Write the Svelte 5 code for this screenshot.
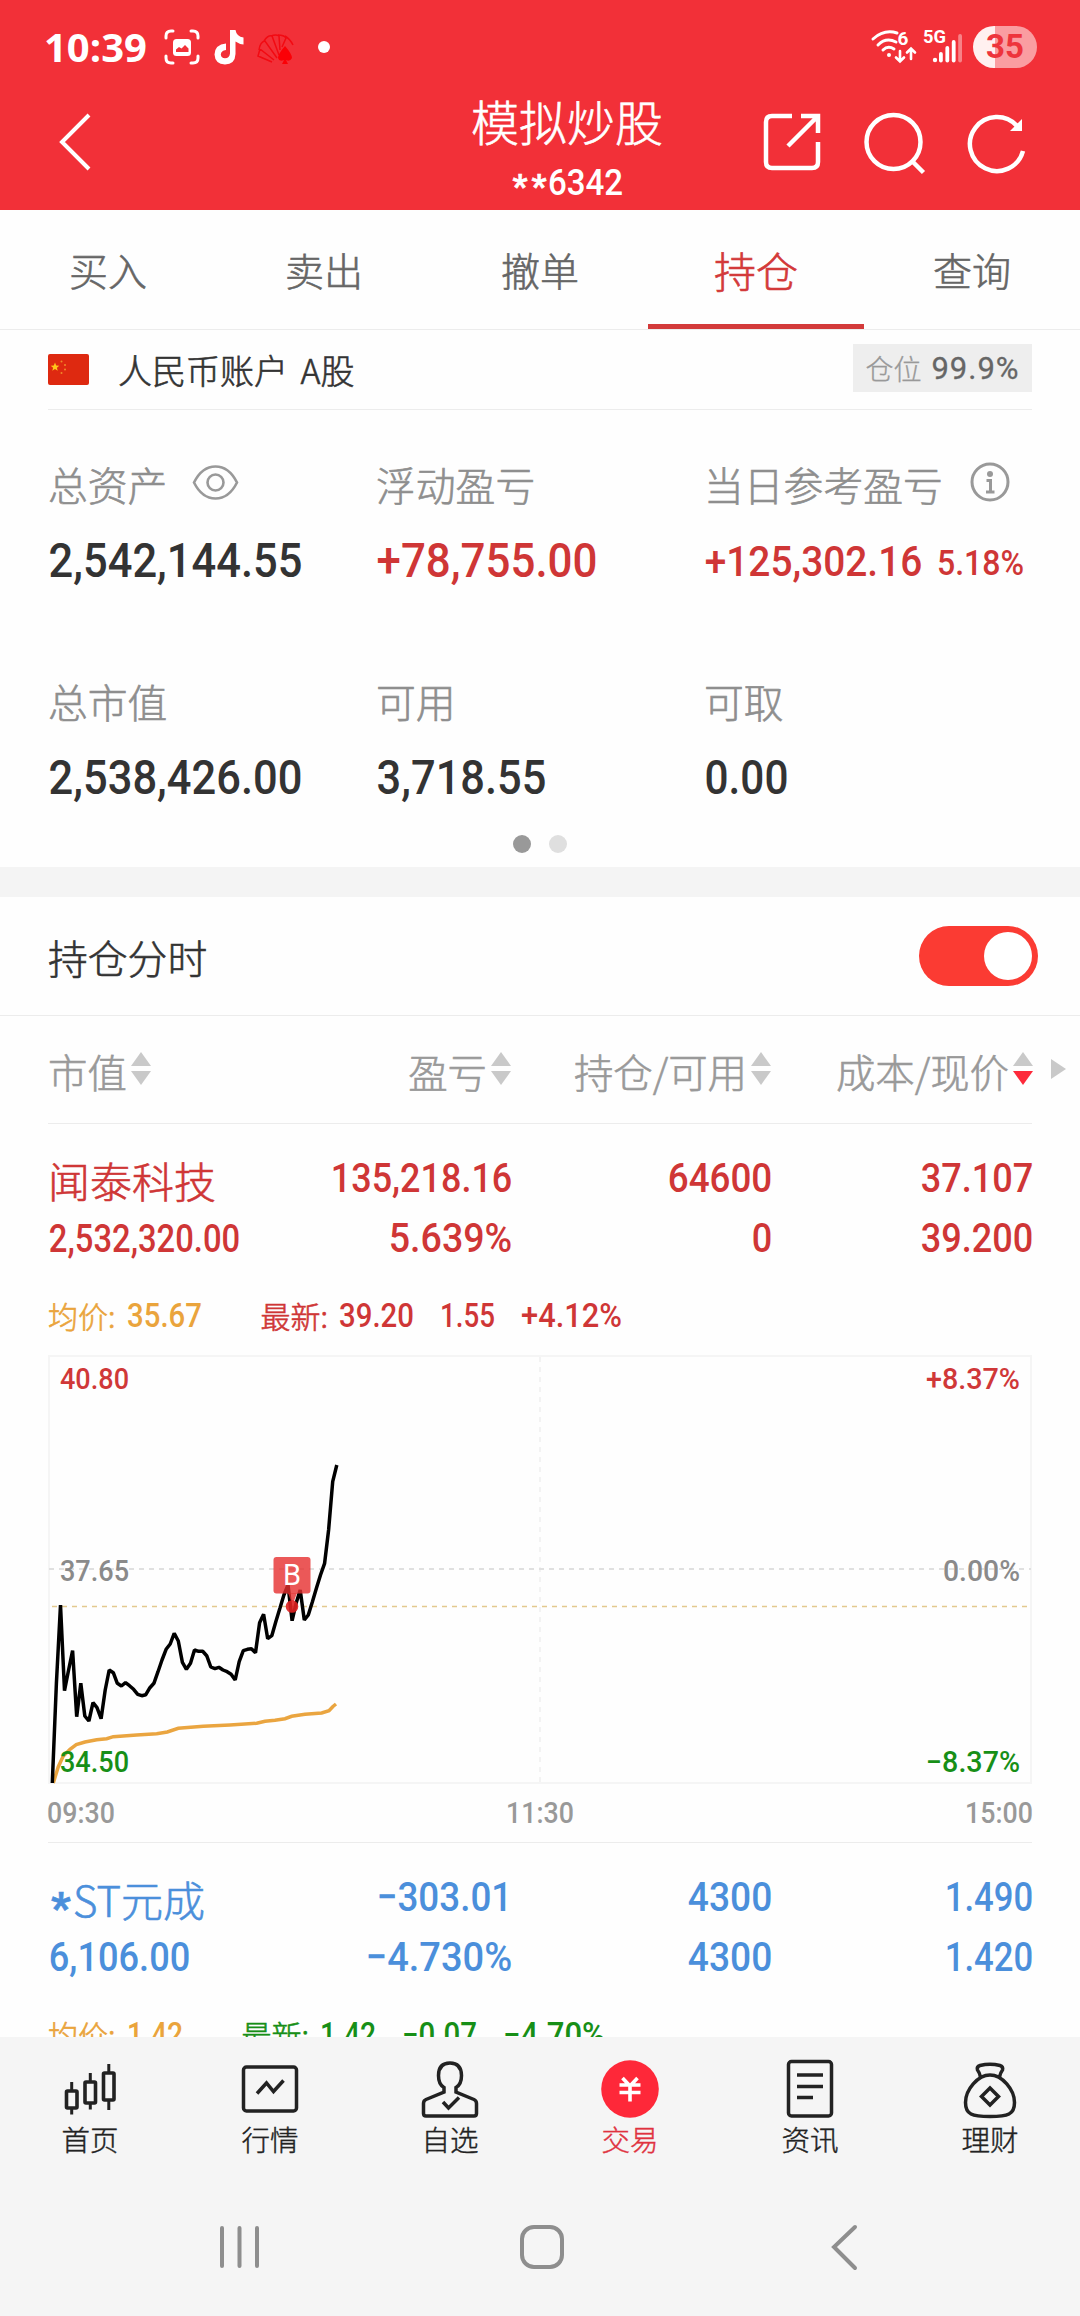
<script lang="ts">
  /**
   * Simulated trading - positions page
   */
  interface Figure {
    text: string
    w: number
    h?: number
  }

  interface Quote {
    avg: Figure
    last: Figure
    change: Figure
    percent: Figure
    tone: string
  }

  interface Position {
    star: boolean
    name: string
    tone: string
    value: Figure
    profit: Figure
    rate: Figure
    held: Figure
    usable: Figure
    cost: Figure
    price: Figure
    quote: Quote
    chart: boolean
  }

  const tabs = ['买入', '卖出', '撤单', '持仓', '查询']
  let activeTab = $state('持仓')
  let showChart = $state(true)

  const positions: Position[] = [
    {
      star: false,
      name: '闻泰科技',
      tone: 'red',
      value: { text: '2,532,320.00', w: 189, h: 27 },
      profit: { text: '135,218.16', w: 179 },
      rate: { text: '5.639%', w: 121 },
      held: { text: '64600', w: 102 },
      usable: { text: '0', w: 18 },
      cost: { text: '37.107', w: 110 },
      price: { text: '39.200', w: 110 },
      quote: {
        avg: { text: '35.67', w: 73 },
        last: { text: '39.20', w: 73 },
        change: { text: '1.55', w: 53 },
        percent: { text: '+4.12%', w: 99 },
        tone: 'red'
      },
      chart: true
    },
    {
      star: true,
      name: 'ST元成',
      tone: 'blue',
      value: { text: '6,106.00', w: 139 },
      profit: { text: '−303.01', w: 133 },
      rate: { text: '−4.730%', w: 144 },
      held: { text: '4300', w: 82 },
      usable: { text: '4300', w: 82 },
      cost: { text: '1.490', w: 86 },
      price: { text: '1.420', w: 86 },
      quote: {
        avg: { text: '1.42', w: 54 },
        last: { text: '1.42', w: 54 },
        change: { text: '−0.07', w: 73 },
        percent: { text: '−4.70%', w: 100 },
        tone: 'green'
      },
      chart: false
    }
  ]

  // One sample per minute, a third of a pixel per unit
  const samples = [
    1329, 1030, 795, 1052, 990, 932, 1130, 1030, 1128, 1143, 1088, 1103, 1136, 1050, 990,
    998, 1030, 1038, 1028, 1037, 1048, 1063, 1067, 1064, 1043, 1030, 995, 960, 928, 912,
    880, 903, 967, 988, 970, 930, 934, 934, 947, 981, 986, 982, 990, 995, 1003,
    1020, 965, 932, 928, 926, 938, 848, 823, 896, 887, 845, 805, 765, 735, 842,
    790, 750, 840, 825, 785, 745, 705, 670, 570, 425, 375
  ]
  const average = [
    [70, 1329], [85, 1280], [100, 1248], [120, 1228], [139, 1214], [165, 1206], [200, 1199],
    [230, 1196], [250, 1190], [320, 1185], [380, 1181], [412, 1176], [445, 1165], [520, 1159],
    [600, 1155], [680, 1150], [705, 1144], [735, 1141], [765, 1136], [785, 1129], [825, 1123],
    [875, 1119], [897, 1112], [908, 1100], [918, 1092]
  ]

  const toX = (v: number) => (v / 3 - 18).toFixed(1)
  const toY = (v: number) => (v / 3 - 15).toFixed(1)

  let pricePoints = $derived(
    samples.map((v, i) => `${toX(67 + i * 12.19)},${toY(v)}`).join(' ')
  )
  let averagePoints = $derived(average.map(([x, y]) => `${toX(x)},${toY(y)}`).join(' '))
</script>

<!-- Condensed numerals: w and h are the drawn width and digit height -->
{#snippet num(text: string, w: number, h: number)}
  {@const size = h / 0.711}
  <svg class="num" width={w} height={h} viewBox="0 0 {w} {h}">
    <text
      x={-size * 0.03}
      y={h}
      font-size={size}
      textLength={w + size * 0.06}
      lengthAdjust="spacingAndGlyphs">{text}</text>
  </svg>
{/snippet}

{#snippet sorter(active: boolean)}
  <svg class="sorter" width="20" height="34" viewBox="0 0 20 34">
    <path d="M10 0L20 14H0Z" fill="#c9c9c9" />
    <path d="M0 19H20L10 33Z" fill={active ? '#fd2a3b' : '#c9c9c9'} />
  </svg>
{/snippet}

<div class="page">
  <header class="top">
    <div class="status">
      <span class="clock">10:39</span>
      <svg class="s-shot" width="36" height="36" viewBox="0 0 36 36" fill="none" stroke="#fff" stroke-width="3" stroke-linecap="round">
        <path d="M2 9V7Q2 2 7 2H9M27 2H29Q34 2 34 7V9M34 27V29Q34 34 29 34H27M9 34H7Q2 34 2 29V27" />
        <rect x="9" y="10" width="18" height="17" rx="3.5" fill="#fff" stroke="none" />
        <path d="M12 23V20.500L15 18L17.500 19.500L21 16L24.500 19.500V23Z" fill="#f23038" stroke="none" />
      </svg>
      <svg class="s-tok" width="30" height="35" viewBox="0 0 30 35">
        <path d="M16 0H21.500Q22.500 6.500 29.500 7.500V14.500Q25 14 21.500 11.500V24Q21 34.500 11 34.500Q1 34 .5 24.500Q.8 14.500 12 13.500V20Q7 20.500 6.800 24.500Q7.200 28.300 11 28.300Q15.500 28 16 23.500Z" fill="#fff" />
      </svg>
      <svg class="s-fan" width="40" height="32" viewBox="0 0 40 32">
        <g fill="none" stroke="#f20a12" stroke-width="1.500">
          <path d="M16 29L2 23L4 16L18 27M3 17Q4 9 9 8L21 25M8 8Q12 2 16 3L23 22M15 3Q20 1 23 3L24 17M22 2Q28 2 30 5L26 14M29 3Q34 6 37 12" />
        </g>
        <path d="M29 13Q36 21 36 25Q34 29 30 27L32 31H26L28 27Q23 29 22 25Q22 21 29 13Z" fill="#fb0006" />
      </svg>
      <span class="s-dot"></span>
      <svg class="s-wifi" width="46" height="34" viewBox="0 0 46 34" fill="none" stroke="#fff" stroke-width="3" stroke-linecap="round">
        <path d="M2 9Q13 -1 26 3M7 15Q15 7 25 12M12 20Q17 15 23 19" />
        <circle cx="18" cy="25" r="2" fill="#fff" stroke="none" />
        <text x="26.500" y="15" class="tiny">6</text>
        <path d="M29 21V31M25 27.500L29 31.500L33 27.500M40 29V19M36 22.500L40 18.500L44 22.500" stroke-width="2.600" />
      </svg>
      <svg class="s-cell" width="40" height="34" viewBox="0 0 40 34">
        <text x="-1" y="13" class="tiny" textLength="23" lengthAdjust="spacingAndGlyphs">5G</text>
        <g fill="#fff">
          <circle cx="11" cy="30" r="2.200" />
          <rect x="15" y="22" width="3.800" height="10.500" rx="1.900" />
          <rect x="21.400" y="16" width="3.800" height="16.500" rx="1.900" />
          <rect x="27.800" y="10" width="3.800" height="22.500" rx="1.900" />
          <rect x="34.200" y="4" width="3.800" height="28.500" rx="1.900" opacity=".4" />
        </g>
      </svg>
      <span class="battery">35</span>
    </div>

    <div class="titlebar">
      <svg class="back" width="36" height="60" viewBox="0 0 36 60" fill="none" stroke="#fff" stroke-width="4">
        <path d="M31 3L4 30L31 57" />
      </svg>
      <div class="title">
        <h1>模拟炒股</h1>
        <p><span class="stars">**</span>{@render num('6342', 73, 26)}</p>
      </div>
      <div class="actions">
        <svg width="58" height="60" viewBox="0 0 58 60" fill="none" stroke="#fff" stroke-width="4.500">
          <path d="M29 4H9Q3 4 3 10V50Q3 56 9 56H49Q55 56 55 50V30M38 4H55V21M54 5L25 34" />
        </svg>
        <svg width="62" height="62" viewBox="0 0 62 62" fill="none" stroke="#fff" stroke-width="4.500">
          <circle cx="30.500" cy="30" r="27" />
          <path d="M49 49L60.500 60.500" />
        </svg>
        <svg width="58" height="60" viewBox="0 0 58 60" fill="none" stroke="#fff" stroke-width="4.500">
          <path d="M50 14A27 27 0 1 0 56 39" />
          <path d="M55 7V19H43Z" fill="#fff" stroke="none" />
        </svg>
      </div>
    </div>
  </header>

  <nav class="tabs">
    {#each tabs as tab}
      <button class="tab" class:active={tab === activeTab} onclick={() => (activeTab = tab)}>{tab}</button>
    {/each}
  </nav>

  <main>
    <section class="account">
      <div class="account-head">
        <svg class="flag" width="41" height="31" viewBox="0 0 41 31">
          <rect width="41" height="31" rx="2" fill="#de2910" />
          <path d="M7 8.500L8.200 11.600L11.300 11.700L8.900 13.700L9.700 16.700L7 15L4.300 16.700L5.100 13.700L2.700 11.700L5.800 11.600Z" fill="#ffc61a" />
          <g fill="#f08a2a">
            <circle cx="13.500" cy="7.500" r="1" />
            <circle cx="17" cy="11" r="1" />
            <circle cx="17" cy="15.500" r="1" />
            <circle cx="13.500" cy="19" r="1" />
          </g>
        </svg>
        <span class="account-name">人民币账户 A股</span>
        <span class="ratio">仓位 <b>99.9%</b></span>
      </div>

      <div class="metrics">
        <div class="metric">
          <div class="label">
            总资产
            <svg class="eye" width="47" height="35" viewBox="0 0 47 35" fill="none" stroke="#999" stroke-width="2.600">
              <path d="M2 17.500Q10 1.500 23.500 1.500T45 17.500Q37 33.500 23.500 33.500T2 17.500Z" />
              <circle cx="23.500" cy="17.500" r="8" />
            </svg>
          </div>
          <div class="value">{@render num('2,542,144.55', 251, 34)}</div>
        </div>
        <div class="metric">
          <div class="label">浮动盈亏</div>
          <div class="value red">{@render num('+78,755.00', 218, 34)}</div>
        </div>
        <div class="metric">
          <div class="label">
            当日参考盈亏
            <svg class="info" width="40" height="40" viewBox="0 0 40 40" fill="none" stroke="#999" stroke-width="3">
              <circle cx="20" cy="20" r="18" />
              <circle cx="20" cy="12" r="3" fill="#999" stroke="none" />
              <path d="M16.500 18.500H20.500V30M16 30H24.500" />
            </svg>
          </div>
          <div class="value red small">
            {@render num('+125,302.16', 215, 30.5)}
            {@render num('5.18%', 85, 25)}
          </div>
        </div>
        <div class="metric">
          <div class="label">总市值</div>
          <div class="value">{@render num('2,538,426.00', 251, 34)}</div>
        </div>
        <div class="metric">
          <div class="label">可用</div>
          <div class="value">{@render num('3,718.55', 167, 34)}</div>
        </div>
        <div class="metric">
          <div class="label">可取</div>
          <div class="value">{@render num('0.00', 81, 34)}</div>
        </div>
      </div>

      <div class="pager"><i class="on"></i><i></i></div>
    </section>

    <section class="switch-row">
      <span>持仓分时</span>
      <button
        class="switch"
        class:on={showChart}
        aria-label="持仓分时"
        onclick={() => (showChart = !showChart)}
      ><i></i></button>
    </section>

    <div class="table-head">
      <span>市值{@render sorter(false)}</span>
      <span>盈亏{@render sorter(false)}</span>
      <span>持仓/可用{@render sorter(false)}</span>
      <span>成本/现价{@render sorter(true)}</span>
      <svg class="more" width="15" height="20" viewBox="0 0 15 20"><path d="M0 0L15 10L0 20Z" fill="#c9c9c9" /></svg>
    </div>

    {#each positions as p}
      <section class="position">
        <div class="cells {p.tone}">
          <div class="name">{#if p.star}<span class="star">*</span>{/if}{p.name}</div>
          <div>{@render num(p.profit.text, p.profit.w, 29.5)}</div>
          <div>{@render num(p.held.text, p.held.w, 29.5)}</div>
          <div>{@render num(p.cost.text, p.cost.w, 29.5)}</div>
          <div class="worth">{@render num(p.value.text, p.value.w, p.value.h ?? 29.5)}</div>
          <div>{@render num(p.rate.text, p.rate.w, 29.5)}</div>
          <div>{@render num(p.usable.text, p.usable.w, 29.5)}</div>
          <div>{@render num(p.price.text, p.price.w, 29.5)}</div>
        </div>

        <div class="quote">
          <span class="orange">均价:{@render num(p.quote.avg.text, p.quote.avg.w, 23)}</span>
          <span class="last {p.quote.tone}">最新:{@render num(p.quote.last.text, p.quote.last.w, 23)}</span>
          <span class={p.quote.tone}>{@render num(p.quote.change.text, p.quote.change.w, 23)}</span>
          <span class={p.quote.tone}>{@render num(p.quote.percent.text, p.quote.percent.w, 23)}</span>
        </div>

        {#if p.chart && showChart}
          <svg class="chart" width="984" height="430" viewBox="0 0 984 430">
            <rect x="1" y="1" width="982" height="427" fill="none" stroke="#f5f5f5" stroke-width="2" />
            <line x1="492" y1="2" x2="492" y2="428" stroke="#f3f3f3" stroke-width="2" stroke-dasharray="5 5" />
            <line x1="1" y1="214" x2="983" y2="214" stroke="#e0e0e0" stroke-width="2" stroke-dasharray="5 5" />
            <line x1="4" y1="251.500" x2="980" y2="251.500" stroke="#e3c98f" stroke-width="1.500" stroke-dasharray="5 5" />

            <!-- Average and price lines -->
            <polyline points={averagePoints} fill="none" stroke="#eaa540" stroke-width="3.500" />
            <polyline points={pricePoints} fill="none" stroke="#000" stroke-width="3.500" stroke-linejoin="bevel" />

            <!-- Buy marker -->
            <path d="M240 238H249L246 246H243Z" fill="#e52d2d" opacity=".8" />
            <circle cx="244" cy="251.500" r="6.300" fill="#df2020" opacity=".9" />
            <rect x="225.500" y="202" width="37" height="36.500" rx="3" fill="#e62e2e" opacity=".8" />
            <text class="buy" x="244" y="230" text-anchor="middle">B</text>

            <g class="axis">
              <text x="12" y="34" textLength="69" lengthAdjust="spacingAndGlyphs" fill="#d03838">40.80</text>
              <text x="12" y="226" textLength="69" lengthAdjust="spacingAndGlyphs" fill="#8a8a8a">37.65</text>
              <text x="12" y="417" textLength="69" lengthAdjust="spacingAndGlyphs" fill="#178f17">34.50</text>
              <text x="878" y="34" textLength="94" lengthAdjust="spacingAndGlyphs" fill="#d03838">+8.37%</text>
              <text x="895" y="226" textLength="77" lengthAdjust="spacingAndGlyphs" fill="#8a8a8a">0.00%</text>
              <text x="878" y="417" textLength="94" lengthAdjust="spacingAndGlyphs" fill="#178f17">−8.37%</text>
            </g>
          </svg>
          <div class="times">
            {@render num('09:30', 66, 21)}
            {@render num('11:30', 66, 21)}
            {@render num('15:00', 66, 21)}
          </div>
        {/if}
      </section>
    {/each}
  </main>

  <footer>
    <nav class="bottom">
      <a href="#home">
        <svg width="60" height="60" viewBox="0 0 60 60" fill="none" stroke="#222" stroke-width="3.600">
          <rect x="6.500" y="33" width="10.500" height="17" rx="1" />
          <rect x="25" y="24" width="10.500" height="21" rx="1" />
          <rect x="43.500" y="15" width="10.500" height="27" rx="1" />
          <path d="M11.700 24V32M11.700 51V56.500M30.300 15V23M30.300 46V51.500M48.800 6V14M48.800 43V52" stroke-width="3" />
        </svg>
        首页
      </a>
      <a href="#market">
        <svg width="60" height="60" viewBox="0 0 60 60" fill="none" stroke="#222" stroke-width="3.500">
          <rect x="3.500" y="9" width="53" height="44" rx="3" />
          <path d="M17 35.500L26.500 25L33.500 33.500L43.500 22.500" />
        </svg>
        行情
      </a>
      <a href="#watch">
        <svg width="60" height="60" viewBox="0 0 60 60" fill="none" stroke="#222" stroke-width="3.500">
          <path d="M24 29.500V34L6 41.500Q3.500 42.500 3.500 45.500V55.500Q3.500 58 6 58H54Q56.500 58 56.500 55.500V45.500Q56.500 42.500 54 41.500L36 34V29.500Q41.500 26.500 41.500 17.500Q41.500 5 30 5T18.500 17.500Q18.500 26.500 24 29.500Z" />
          <path d="M23 44L28.500 50L39 39.500" />
        </svg>
        自选
      </a>
      <a href="#trade" class="active">
        <svg width="60" height="60" viewBox="0 0 60 60" fill="none">
          <circle cx="30" cy="31" r="28.800" fill="#fe2839" />
          <path d="M22.500 20L30 28L37.500 20M19.500 27H40.500M19.500 34.500H40.500M30 27.500V43.500" stroke="#fff" stroke-width="3.600" />
        </svg>
        交易
      </a>
      <a href="#news">
        <svg width="60" height="60" viewBox="0 0 60 60" fill="none" stroke="#222" stroke-width="3.500">
          <rect x="8.500" y="3.500" width="43" height="54.500" rx="3" />
          <path d="M17 17H43M17 28.500H43M17 39.500H33" />
        </svg>
        资讯
      </a>
      <a href="#wealth">
        <svg width="60" height="60" viewBox="0 0 60 60" fill="none" stroke="#222" stroke-width="3.500">
          <path d="M20.500 19Q19.500 14.500 17.500 12Q16.500 8.500 20 7.500Q30 5 40 7.500Q43.500 8.500 42.500 12Q40.500 14.500 39.500 19" />
          <path d="M30 17C42 17 54.500 31.500 54.500 44.500C54.500 56.500 48 58.500 30 58.500S5.500 56.500 5.500 44.500C5.500 31.500 18 17 30 17Z" />
          <path d="M30 30L38.500 38.500L30 47L21.500 38.500Z" />
        </svg>
        理财
      </a>
    </nav>
    <div class="system">
      <svg width="42" height="46" viewBox="0 0 42 46" stroke="#8e8e8e" stroke-width="4" stroke-linecap="round">
        <path d="M3 4V42M20.500 4V42M38 4V42" />
      </svg>
      <svg width="46" height="46" viewBox="0 0 46 46" fill="none" stroke="#8e8e8e" stroke-width="4">
        <rect x="3" y="3" width="40" height="40" rx="12" />
      </svg>
      <svg width="30" height="48" viewBox="0 0 30 48" fill="none" stroke="#8e8e8e" stroke-width="4" stroke-linecap="round">
        <path d="M26 4L5 24L26 45" />
      </svg>
    </div>
  </footer>
</div>

<style>
  :global(body) {
    margin: 0;
  }

  .page {
    width: 1080px;
    height: 2316px;
    display: flex;
    flex-direction: column;
    overflow: hidden;
    background: #fefefe;
    color: #333;
    font-family: 'Noto Sans CJK SC', sans-serif;
    font-weight: 300;
    -webkit-text-stroke: 0.6px currentColor;
  }

  .page :global(*) {
    box-sizing: border-box;
  }

  svg {
    display: block;
    flex: none;
    overflow: visible;
    -webkit-text-stroke: 0;
  }

  button {
    border: 0;
    padding: 0;
    background: none;
    font: inherit;
    color: inherit;
  }

  .num {
    fill: currentColor;
    font-family: Roboto, sans-serif;
    font-weight: 500;
  }

  .red {
    color: #cf3636;
  }

  .blue {
    color: #4b8fdb;
  }

  .green {
    color: #178f17;
  }

  .orange {
    color: #eaa43c;
  }

  /* Header */
  .top {
    flex: none;
    height: 210px;
    background: #f23038;
    color: #fff;
  }

  .status {
    height: 94px;
    padding: 0 43px 0 44px;
    display: flex;
    align-items: center;
    -webkit-text-stroke: 0;
  }

  .clock {
    width: 103px;
    font: 700 40px/94px 'Open Sans', 'Noto Sans', sans-serif;
  }

  .s-shot {
    margin-left: 17px;
  }

  .s-tok {
    margin-left: 14px;
  }

  .s-fan {
    margin: 4px 0 0 12px;
  }

  .s-dot {
    width: 12px;
    height: 12px;
    margin-left: 22px;
    border-radius: 50%;
    background: #fff;
  }

  .s-wifi {
    margin-left: auto;
  }

  .s-cell {
    margin-left: 7px;
  }

  .tiny {
    font: 700 19px Roboto, sans-serif;
    fill: #fff;
    stroke: none;
  }

  .battery {
    width: 64px;
    height: 42px;
    margin-left: 9px;
    border-radius: 21px;
    background: linear-gradient(90deg, #fff0f0 22px, #fa9da1 22px);
    color: #ee343c;
    font: 700 33px/42px Roboto, sans-serif;
    text-align: center;
  }

  .titlebar {
    height: 116px;
    padding-left: 58px;
    display: grid;
    grid-template-columns: 315px 388px 1fr;
    align-items: start;
  }

  .back {
    margin-top: 18px;
  }

  .title h1 {
    margin: 0;
    font-size: 48px;
    font-weight: 300;
    line-height: 52px;
    text-align: center;
  }

  .title p {
    height: 26px;
    margin: 23px 0 0;
    display: flex;
    justify-content: center;
  }

  .stars {
    width: 36px;
    font: 700 33px/36px Roboto, sans-serif;
    letter-spacing: 4px;
  }

  .actions {
    display: flex;
    gap: 42px;
    padding: 18px 0 0 2px;
  }

  /* Tabs */
  .tabs {
    flex: none;
    height: 120px;
    display: flex;
    border-bottom: 1px solid #ececec;
  }

  .tab {
    flex: 1;
    padding-top: 4px;
    border-bottom: 5px solid transparent;
    color: #666;
    font-size: 39px;
  }

  .tab.active {
    border-color: #d33a3a;
    color: #d33a3a;
    font-size: 42px;
  }

  main {
    flex: 1;
    min-height: 0;
    overflow: hidden;
  }

  /* Account summary */
  .account {
    height: 567px;
    padding: 0 48px;
    border-bottom: 30px solid #f4f4f4;
  }

  .account-head {
    height: 80px;
    display: flex;
    align-items: center;
    border-bottom: 1px solid #ececec;
  }

  .account-name {
    margin-left: 29px;
    font-size: 34px;
    word-spacing: 5px;
  }

  .ratio {
    width: 179px;
    height: 48px;
    margin: 0 0 3px auto;
    display: flex;
    align-items: center;
    justify-content: center;
    gap: 10px;
    background: #eee;
    color: #999;
    font-size: 28px;
    -webkit-text-stroke: 0.3px currentColor;
  }

  .ratio b {
    color: #666;
    font: 400 31px Roboto, sans-serif;
    letter-spacing: 1px;
  }

  .metrics {
    padding-top: 48px;
    display: grid;
    grid-template-columns: repeat(3, 328px);
    grid-auto-rows: 217px;
  }

  .label {
    height: 50px;
    display: flex;
    align-items: center;
    color: #8e8e8e;
    font-size: 39.8px;
    white-space: nowrap;
  }

  .eye {
    margin: 0 0 2px 25px;
  }

  .info {
    margin: 0 0 2px 27px;
  }

  .value {
    height: 34px;
    margin-top: 35px;
    padding-left: 2px;
    display: flex;
    align-items: flex-end;
  }

  .value.small {
    height: 32px;
    gap: 17px;
  }

  .pager {
    height: 18px;
    margin-top: -57px;
    display: flex;
    justify-content: center;
    gap: 18px;
  }

  .pager i {
    width: 18px;
    height: 18px;
    border-radius: 50%;
    background: #dfdfdf;
  }

  .pager i.on {
    background: #999;
  }

  /* Intraday toggle */
  .switch-row {
    height: 119px;
    padding: 0 42px 0 48px;
    display: flex;
    align-items: center;
    justify-content: space-between;
    border-bottom: 1px solid #ececec;
    font-size: 39.8px;
  }

  .switch {
    width: 119px;
    height: 60px;
    padding: 6px;
    display: flex;
    border-radius: 30px;
    background: #ccc;
  }

  .switch.on {
    justify-content: flex-end;
    background: #fb3b33;
  }

  .switch i {
    width: 48px;
    height: 48px;
    border-radius: 50%;
    background: #fff;
  }

  /* Table */
  .table-head {
    height: 108px;
    margin: 0 14px 0 48px;
    display: grid;
    grid-template-columns: 200px 263px 260px 262px 15px;
    align-items: center;
    color: #999;
    font-size: 39.4px;
    background: linear-gradient(#ececec, #ececec) 0 100% / 984px 1px no-repeat;
  }

  .table-head span {
    display: flex;
    align-items: center;
    justify-content: flex-end;
    white-space: nowrap;
  }

  .table-head span:first-child {
    justify-content: flex-start;
  }

  .sorter {
    margin: 0 0 2px 4px;
  }

  .more {
    margin: 0 0 2px 18px;
  }

  .position {
    height: 719px;
    padding: 38px 48px 0;
    background: linear-gradient(#ececec, #ececec) 48px 100% / 984px 1px no-repeat;
  }

  .cells {
    display: grid;
    grid-template-columns: 200px 263px 260px 261px;
    grid-template-rows: 60px 60px;
  }

  .cells > div {
    display: flex;
    justify-content: flex-end;
  }

  .cells > .name {
    height: 40px;
    justify-content: flex-start;
    font-size: 42px;
    line-height: 36px;
    white-space: nowrap;
  }

  .cells > .worth {
    height: 29.5px;
    align-items: flex-end;
    justify-content: flex-start;
    padding-left: 2px;
  }

  .star {
    width: 25px;
    padding: 6px 0 0 3px;
    font: 900 42px/42px Roboto, sans-serif;
  }

  .quote {
    height: 73px;
    padding-top: 16px;
    display: flex;
    font-size: 30px;
    line-height: 32px;
  }

  .quote span {
    height: 34px;
    display: flex;
    align-items: center;
    gap: 12px;
    margin-right: 28px;
  }

  .quote .orange {
    margin-right: 60px;
  }

  .axis {
    font: 500 29.5px Roboto, sans-serif;
  }

  .buy {
    fill: #fff;
    font: 400 29px Roboto, sans-serif;
  }

  .times {
    margin-top: 17px;
    display: flex;
    justify-content: space-between;
    color: #999;
  }

  /* Bottom navigation */
  footer {
    flex: none;
    height: 279px;
    background: #f5f5f5;
  }

  .bottom {
    height: 140px;
    padding-top: 21px;
    display: grid;
    grid-template-columns: repeat(6, 1fr);
  }

  .bottom a {
    display: flex;
    flex-direction: column;
    align-items: center;
    color: #222;
    font-size: 28.5px;
    line-height: 42px;
    text-decoration: none;
    -webkit-text-stroke: 0.4px currentColor;
  }

  .bottom a.active {
    color: #e0323f;
  }

  .system {
    height: 139px;
    padding-left: 219px;
    display: flex;
    align-items: center;
    gap: 258px;
  }

  .system svg:last-child {
    margin-left: 6px;
  }
</style>
